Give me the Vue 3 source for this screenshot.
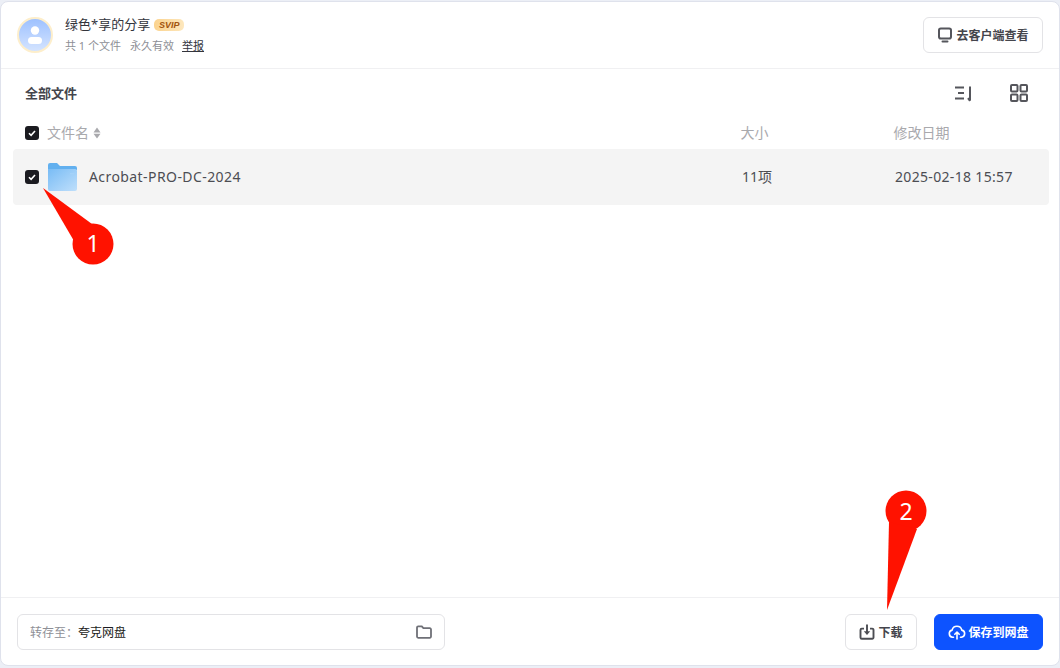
<template>
  <div class="page">
    <main class="card">
      <header class="head">
        <div class="avatar">
          <svg viewBox="0 0 36 36" width="36" height="36">
            <defs>
              <linearGradient id="av" x1="0" y1="0" x2="0" y2="1">
                <stop offset="0" stop-color="#9cc0ff" />
                <stop offset="1" stop-color="#d6e5ff" />
              </linearGradient>
            </defs>
            <circle cx="18" cy="18" r="17" fill="url(#av)" stroke="#fdeecb" stroke-width="2" />
            <circle cx="18" cy="13.5" r="4.2" fill="#fff" />
            <rect x="11" y="20" width="14" height="7" rx="3.5" fill="#fff" />
          </svg>
        </div>
        <div class="who">
          <div class="title">
            <span>绿色*享的分享</span>
            <span class="svip">SVIP</span>
          </div>
          <div class="meta">
            <span class="count">共 1 个文件</span>
            <span>永久有效</span>
            <a class="report">举报</a>
          </div>
        </div>
        <button class="btn client">
          <svg viewBox="0 0 16 16" width="16" height="16" fill="none" stroke="#55565c" stroke-width="2">
            <rect x="2" y="1.5" width="12" height="10" rx="1.8" />
            <path d="M5.500 14.600h5" stroke-linecap="round" />
          </svg>
          去客户端查看
        </button>
      </header>

      <section class="toolbar">
        <h2>全部文件</h2>
        <div class="tools">
          <svg viewBox="0 0 20 20" width="20" height="20" fill="none" stroke="#55565c" stroke-width="2">
            <path d="M1 4.500h9M4 10h6M1 15.500h9M16 3.500v14" />
            <path d="M14 15.200l2 2.600" />
          </svg>
          <svg viewBox="0 0 20 20" width="20" height="20" fill="none" stroke="#55565c" stroke-width="2">
            <rect x="2" y="2" width="6.500" height="6.500" rx="1" />
            <rect x="11.500" y="2" width="6.500" height="6.500" rx="1" />
            <rect x="2" y="11.500" width="6.500" height="6.500" rx="1" />
            <rect x="11.500" y="11.500" width="6.500" height="6.500" rx="1" />
          </svg>
        </div>
      </section>

      <div class="grid thead">
        <div class="namecell">
          <span class="check"><svg viewBox="0 0 14 14" width="14" height="14"><path d="M4 7.200l2.100 2.100L10 5" fill="none" stroke="#fff" stroke-width="1.600" /></svg></span>
          <span class="t">文件名</span>
          <svg class="sort" viewBox="0 0 8 12" width="8" height="12"><path d="M4 .5l3.500 5H.5zM4 11.500L.5 6.800h7z" fill="#a9a9ad" /></svg>
        </div>
        <span class="t nudge">大小</span>
        <span class="t nudge">修改日期</span>
      </div>

      <div class="grid row">
        <div class="namecell">
          <span class="check"><svg viewBox="0 0 14 14" width="14" height="14"><path d="M4 7.200l2.100 2.100L10 5" fill="none" stroke="#fff" stroke-width="1.600" /></svg></span>
          <svg class="folder" viewBox="0 0 30 28" width="30" height="28">
            <defs>
              <linearGradient id="fd" x1="0" y1="0" x2="1" y2="1">
                <stop offset="0" stop-color="#79bcf5" />
                <stop offset="1" stop-color="#bfdffb" />
              </linearGradient>
            </defs>
            <path d="M0 2a2 2 0 012-2h7l3 3h15a2 2 0 012 2v2H0z" fill="#62b0ef" />
            <path d="M0 6h27a2 2 0 012 2v18a2 2 0 01-2 2H2a2 2 0 01-2-2z" fill="url(#fd)" />
            <rect x="22" y="10" width="4" height="1.400" fill="#a5d2f8" />
          </svg>
          <span class="t fname">Acrobat-PRO-DC-2024</span>
        </div>
        <span class="t">11项</span>
        <span class="t date">2025-02-18 15:57</span>
      </div>

      <div class="spacer"></div>

      <footer class="foot">
        <div class="saveto">
          <span class="label">转存至：</span>
          <span class="dest">夸克网盘</span>
          <svg viewBox="0 0 16 16" width="16" height="16" fill="none" stroke="#6f7077" stroke-width="1.800">
            <path d="M1 3.500a1.200 1.200 0 011.200-1.200h3.600l1.600 1.900h6.400A1.200 1.200 0 0115 5.400v7.200a1.200 1.200 0 01-1.200 1.200H2.200A1.200 1.200 0 011 12.600z" />
          </svg>
        </div>
        <button class="btn download">
          <svg viewBox="0 0 16 16" width="16" height="16" fill="none" stroke="#4c4d53" stroke-width="1.900">
            <path d="M5 4.600H2.800A1.300 1.300 0 001.500 5.900v7.600a1.300 1.300 0 001.300 1.300h10.400a1.300 1.300 0 001.300-1.300V5.900a1.300 1.300 0 00-1.300-1.300H11" />
            <path d="M8 .4v8" />
            <path d="M4.800 7.200h6.400L8 11z" fill="#4c4d53" stroke="none" />
          </svg>
          下载
        </button>
        <button class="btn save">
          <svg viewBox="0 0 18 16" width="18" height="16" fill="none" stroke="#fff" stroke-width="1.600" stroke-linecap="round" stroke-linejoin="round">
            <path d="M5.500 13.200H4.600a3.600 3.600 0 01-.5-7.100 5 5 0 019.700 0 3.600 3.600 0 01-.4 7.100h-.9" />
            <path d="M9 15V8.200M6.800 10.200L9 8l2.200 2.200" />
          </svg>
          保存到网盘
        </button>
      </footer>
    </main>

    <svg class="marks" viewBox="0 0 1060 668" width="1060" height="668">
      <g fill="#ff1200">
        <circle cx="93" cy="244" r="20.500" />
        <path d="M43 188L92 224 74 241z" />
        <circle cx="906" cy="511" r="20.500" />
        <path d="M887 610L889 522 917 529z" />
      </g>
      <g class="marknum">
        <text x="93" y="252">1</text>
        <text x="906" y="520">2</text>
      </g>
    </svg>
  </div>
</template>

<script setup>
</script>

<style>
html, body { margin: 0; background: #eceff6; }
</style>

<style scoped>
.page {
  position: relative;
  width: 1060px;
  height: 668px;
  overflow: hidden;
  padding-top: 1px;
  box-sizing: border-box;
  font-family: "Noto Sans", "Noto Sans CJK SC", sans-serif;
  color: #4c4d53;
}
.card {
  width: 1060px;
  height: 665px;
  box-sizing: border-box;
  background: #fff;
  border: 1px solid #dfe2ec;
  border-radius: 8px;
  display: flex;
  flex-direction: column;
}
.head {
  height: 67px;
  flex: none;
  box-sizing: border-box;
  border-bottom: 1px solid #f0f0f2;
  display: flex;
  align-items: center;
  padding: 0 16px;
}
.avatar { width: 36px; height: 36px; margin-right: 12px; }
.avatar svg { display: block; }
.who { flex: 1; display: flex; flex-direction: column; gap: 4px; margin-bottom: 1px; }
.title {
  display: flex;
  align-items: center;
  gap: 4px;
  font-size: 13px;
  line-height: 19px;
  color: #33343c;
}
.svip {
  width: 30px;
  height: 12px;
  border-radius: 5px;
  background: linear-gradient(90deg, #fbd38e, #fde7bd);
  color: #a2540e;
  font: italic 700 9px/12px "Liberation Sans", sans-serif;
  text-align: center;
}
.meta {
  display: flex;
  gap: 8px;
  font-size: 11px;
  line-height: 16px;
  color: #8e8f96;
}
.count { margin-right: 1px; }
.report { color: #33343c; text-decoration: underline; }
.btn {
  font-family: inherit;
  display: flex;
  align-items: center;
  justify-content: center;
  gap: 3px;
  height: 36px;
  box-sizing: border-box;
  background: #fff;
  border: 1px solid #e3e3e6;
  border-radius: 6px;
  font-size: 12px;
  font-weight: 700;
  color: #44454c;
  padding: 0;
}
.client { width: 120px; }
.toolbar {
  height: 48px;
  flex: none;
  display: flex;
  align-items: center;
  justify-content: space-between;
  padding: 0 16px 0 24px;
}
.toolbar h2 { margin: 0 0 2px; font-size: 13px; font-weight: 700; color: #44454c; }
.tools { display: flex; gap: 35px; align-items: center; padding-right: 14px; }
.tools svg { display: block; }
.grid {
  display: grid;
  grid-template-columns: 717px 153px 1fr;
  align-items: center;
  margin: 0 10px 0 12px;
  padding-left: 12px;
  font-size: 14px;
}
.t { margin-bottom: 2px; }
.thead { height: 32px; flex: none; color: #a9a9ad; }
.nudge { margin-left: -1.500px; }
.row {
  height: 56px;
  flex: none;
  background: #f4f4f4;
  border-radius: 4px;
}
.namecell { display: flex; align-items: center; }
.check {
  width: 14px;
  height: 14px;
  border-radius: 3px;
  background: #1b1b20;
  margin-right: 8px;
  flex: none;
}
.check svg { display: block; }
.sort { margin-left: 4px; }
.row .check { margin-right: 9px; }
.folder { flex: none; margin-right: 11px; }
.fname { letter-spacing: 0.42px; }
.date { letter-spacing: 0.33px; }
.spacer { flex: 1; }
.foot {
  height: 68px;
  flex: none;
  box-sizing: border-box;
  border-top: 1px solid #f0f0f2;
  display: flex;
  align-items: center;
  gap: 17px;
  padding: 0 16px;
}
.saveto {
  width: 428px;
  height: 36px;
  box-sizing: border-box;
  border: 1px solid #e3e3e6;
  border-radius: 6px;
  display: flex;
  align-items: center;
  font-size: 12px;
  padding: 0 12px;
  margin-right: 383px;
}
.label { color: #8e8f96; }
.dest { flex: 1; color: #1b1b20; }
.download { width: 72px; }
.save { width: 109px; background: #0d53ff; border-color: #0d53ff; color: #fff; gap: 2px; }
.marks { position: absolute; left: 0; top: 0; pointer-events: none; }
.marknum text {
  fill: #fff;
  font: 400 23px "Noto Sans", sans-serif;
  text-anchor: middle;
}
</style>
